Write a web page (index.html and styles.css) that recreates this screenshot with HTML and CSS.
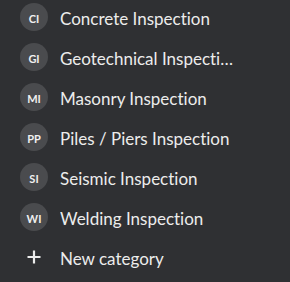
FILE: index.html
```html
<!DOCTYPE html>
<html>
<head>
<meta charset="utf-8">
<link rel="stylesheet" href="styles.css">
</head>
<body>
<ul class="list">
  <li class="row"><span class="badge">CI</span><span class="label">Concrete Inspection</span></li>
  <li class="row"><span class="badge">GI</span><span class="label">Geotechnical Inspection</span></li>
  <li class="row"><span class="badge">MI</span><span class="label">Masonry Inspection</span></li>
  <li class="row"><span class="badge">PP</span><span class="label">Piles / Piers Inspection</span></li>
  <li class="row"><span class="badge">SI</span><span class="label">Seismic Inspection</span></li>
  <li class="row"><span class="badge">WI</span><span class="label">Welding Inspection</span></li>
  <li class="row"><span class="plus"><svg width="14" height="14" viewBox="0 0 14 14"><path d="M7 0.5V13.5M0.5 7H13.5" stroke="#ececec" stroke-width="2.2" fill="none"/></svg></span><span class="label">New category</span></li>
</ul>
</body>
</html>
```
FILE: styles.css
```css
html, body {
  margin: 0;
  padding: 0;
  background: #2f3033;
  width: 290px;
  height: 282px;
  overflow: hidden;
}
.list {
  list-style: none;
  margin: 0;
  padding: 3px 0 0 20px;
  display: flex;
  flex-direction: column;
  gap: 12px;
  font-family: Lato, "Noto Sans", sans-serif;
  font-variant-ligatures: none;
}
.row {
  display: flex;
  align-items: center;
  height: 28px;
  gap: 12px;
}
.badge, .plus {
  flex: none;
  width: 28px;
  height: 28px;
  border-radius: 50%;
  display: flex;
  align-items: center;
  justify-content: center;
  box-sizing: border-box;
}
.badge {
  font-weight: 700;
  font-size: 11px;
  color: #f0f0f0;
  background: #4a4b4e;
  padding-top: 3px;
}
.plus svg {
  display: block;
}
.label {
  color: #ececec;
  font-size: 17px;
  white-space: nowrap;
  overflow: hidden;
  text-overflow: ellipsis;
  max-width: 176px;
  padding-top: 3px;
}
```
